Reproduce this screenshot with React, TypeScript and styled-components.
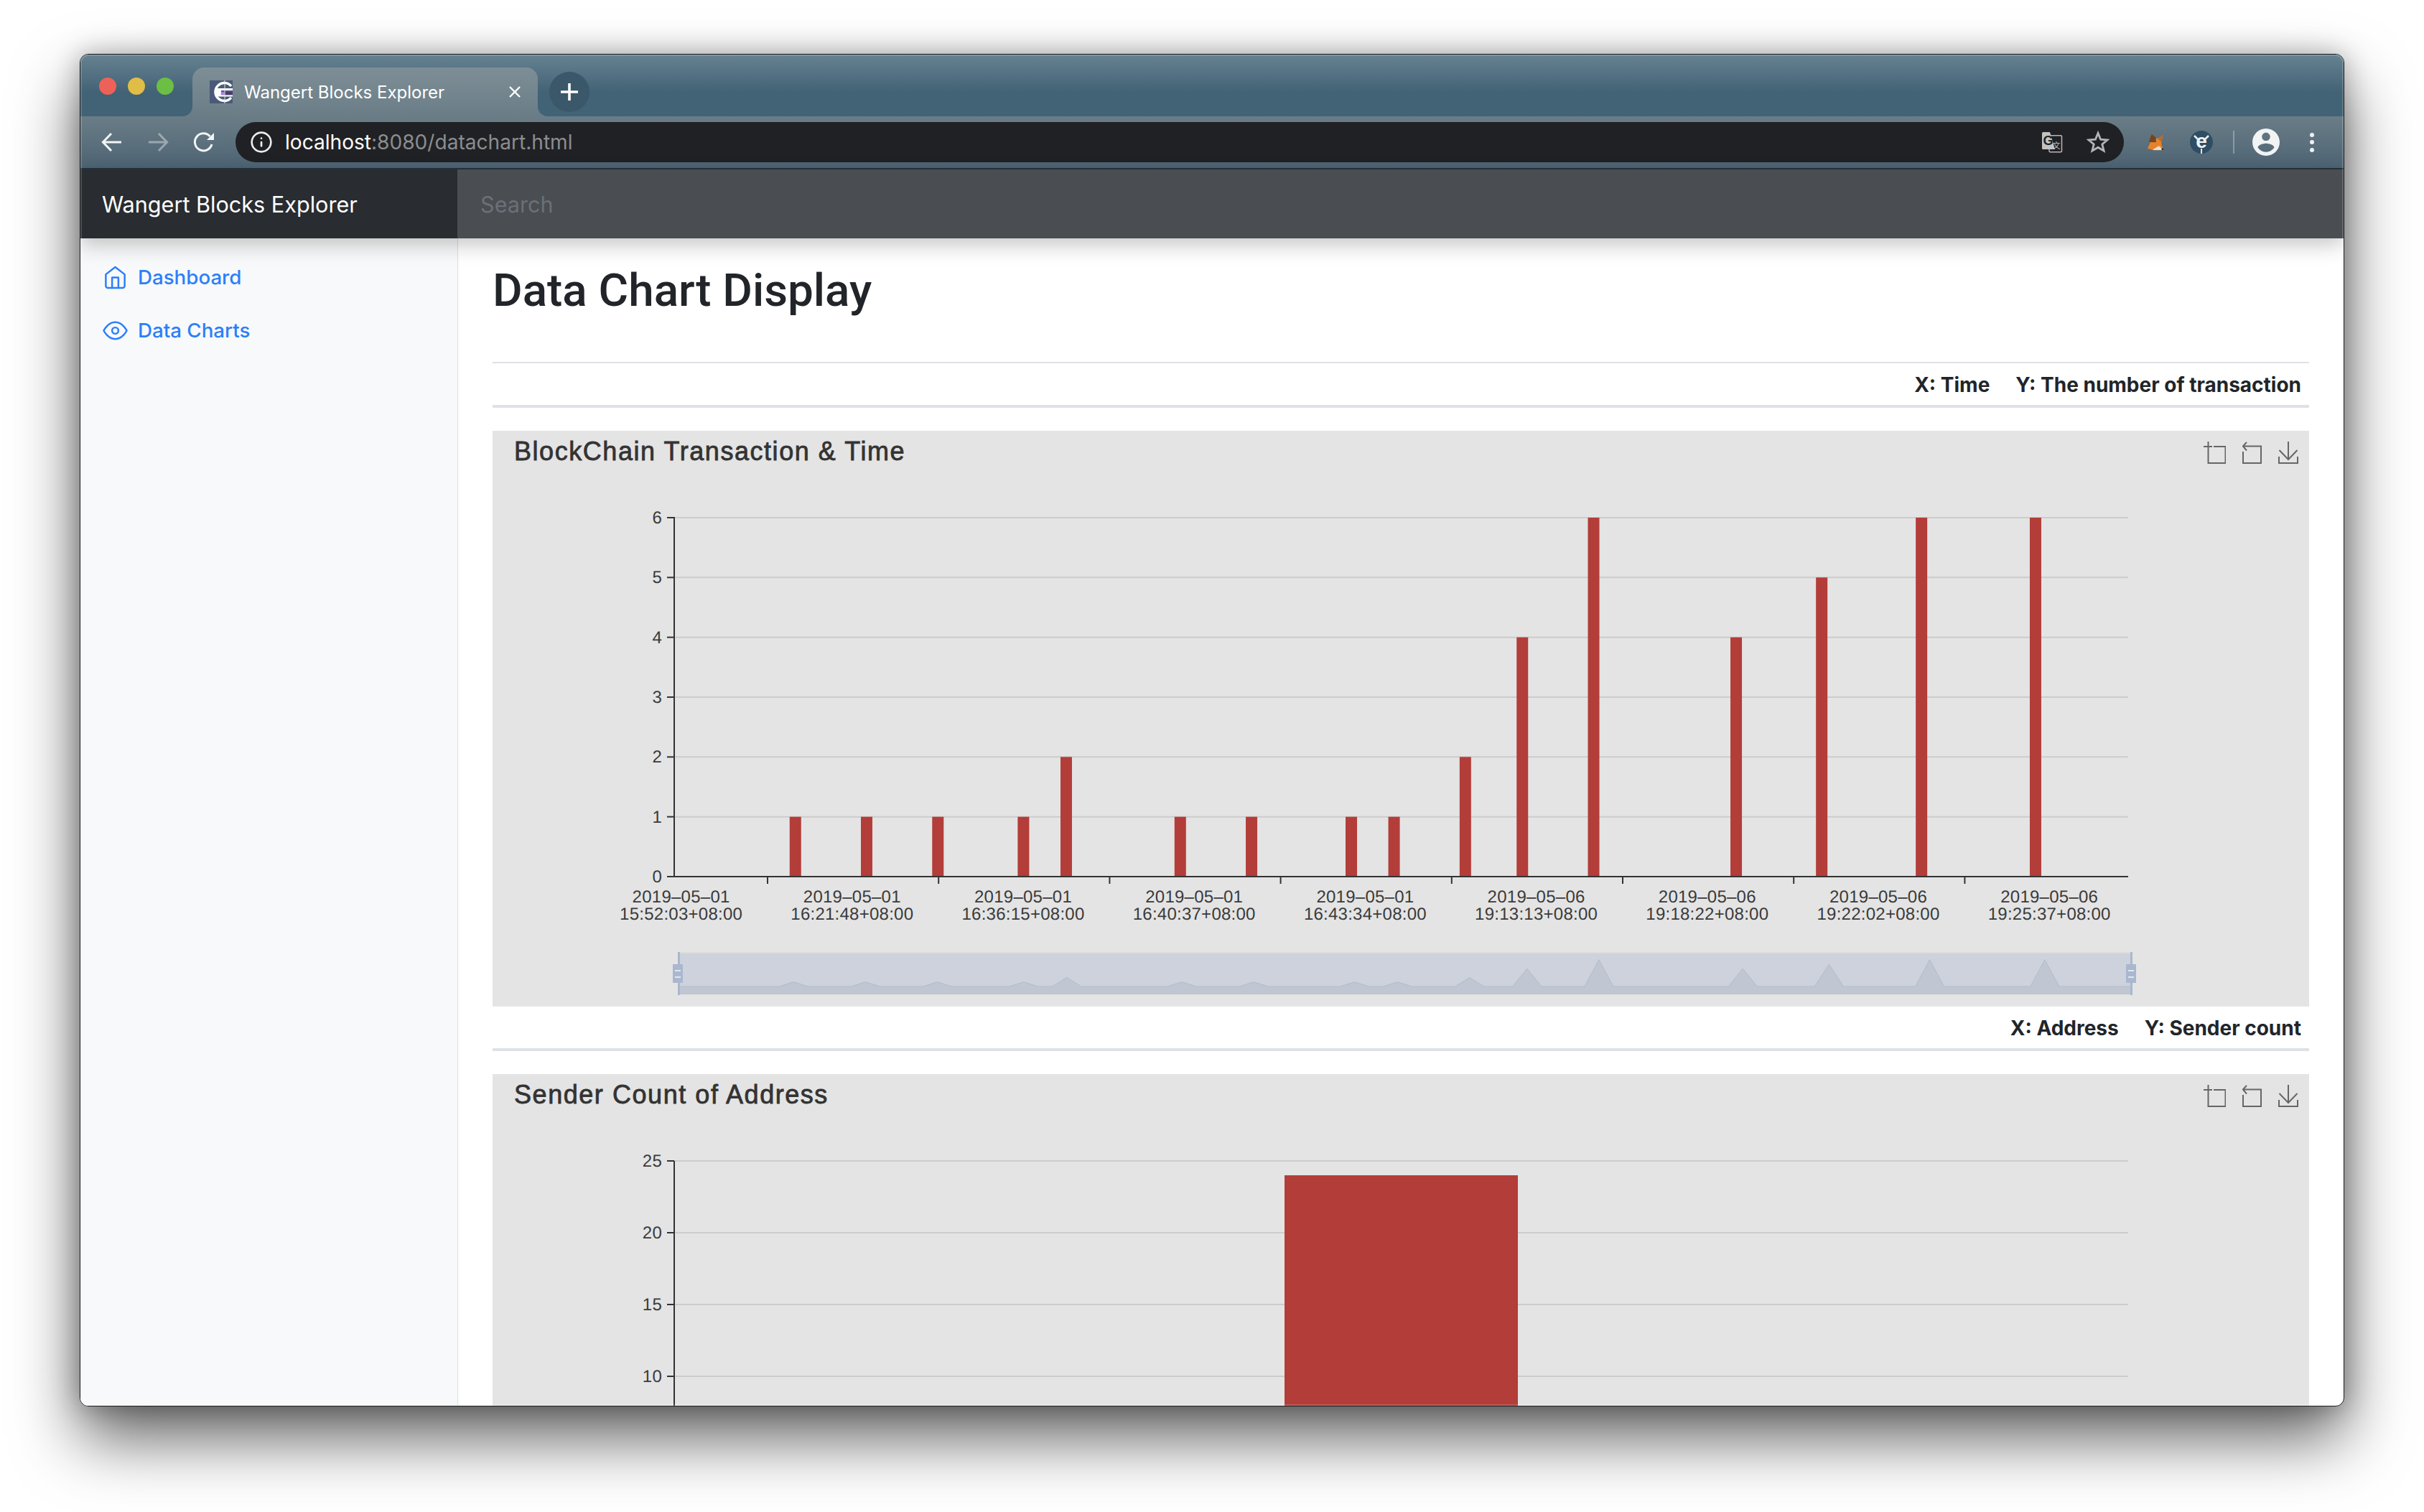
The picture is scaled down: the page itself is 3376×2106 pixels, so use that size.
import React from "react";
import styled, { createGlobalStyle } from "styled-components";
import { Info } from "lucide-react";

const GlobalStyle = createGlobalStyle`
  html, body { margin: 0; padding: 0; background: #fff; }
  body { font-family: Inter, "Liberation Sans", sans-serif; }
  * { box-sizing: border-box; }
`;

const Page = styled.div`
  width: 3376px;
  height: 2106px;
  padding: 75px 0 0 111px;
  overflow: hidden;
  background: #fff;
`;

const Window = styled.div`
  position: relative;
  width: 3154px;
  height: 1884px;
  border: 1px solid #1c1c1c;
  border-radius: 12px;
  overflow: hidden;
  display: flex;
  flex-direction: column;
  background: #fff;
  box-shadow: 0 44px 90px rgba(0, 0, 0, 0.62), 0 0 36px rgba(0, 0, 0, 0.28);
  &::after {
    content: "";
    position: absolute;
    inset: 0;
    border-radius: 11px;
    box-shadow: inset 0 0 0 2px rgba(255, 255, 255, 0.16);
    pointer-events: none;
    z-index: 5;
  }
`;

const TabStrip = styled.div`
  height: 86px;
  flex: none;
  display: flex;
  align-items: flex-end;
  padding-left: 26px;
  background: linear-gradient(180deg, #668291 0%, #426275 62%, #426275 100%);
`;

const Lights = styled.div`
  align-self: flex-start;
  margin-top: 32px;
  display: flex;
  gap: 16px;
`;

const Light = styled.span<{ $color: string }>`
  width: 24px;
  height: 24px;
  border-radius: 50%;
  background: ${(p) => p.$color};
`;

const Tab = styled.div`
  position: relative;
  margin-left: 26px;
  width: 481px;
  height: 68px;
  flex: none;
  display: flex;
  align-items: center;
  padding: 0 24px;
  gap: 16px;
  border-radius: 16px 16px 0 0;
  background: linear-gradient(180deg, #7e8e96 0%, #6a7d87 100%);
  &::before,
  &::after {
    content: "";
    position: absolute;
    bottom: 0;
    width: 14px;
    height: 14px;
  }
  &::before {
    left: -14px;
    background: radial-gradient(circle at 0 0, transparent 13.5px, #6a7d87 14.5px);
  }
  &::after {
    right: -14px;
    background: radial-gradient(circle at 100% 0, transparent 13.5px, #6a7d87 14.5px);
  }
`;

const TabTitle = styled.span`
  flex: 1;
  font-size: 24px;
  color: #fff;
  white-space: nowrap;
`;

const NewTab = styled.div`
  align-self: flex-start;
  margin: 24px 0 0 16px;
  width: 56px;
  height: 56px;
  border-radius: 50%;
  background: #3a5869;
  display: flex;
  align-items: center;
  justify-content: center;
`;

const Toolbar = styled.div`
  height: 74px;
  flex: none;
  display: flex;
  align-items: flex-start;
  padding: 8px 0 0 28px;
  background: linear-gradient(180deg, #6a7d87 0%, #4e6474 97%, #25323c 97%);
`;

const NavButtons = styled.div`
  height: 56px;
  display: flex;
  align-items: center;
  gap: 32px;
`;

const Omnibox = styled.div`
  margin-left: 28px;
  width: 2630px;
  height: 56px;
  flex: none;
  border-radius: 28px;
  background: #202124;
  display: flex;
  align-items: center;
  padding: 0 18px 0 20px;
  color: #ececec;
`;

const Address = styled.span`
  margin-left: 17px;
  font-size: 28.1px;
  color: #fff;
  white-space: nowrap;
  em {
    font-style: normal;
    color: #8b8d90;
  }
`;

const OmniActions = styled.div`
  margin-left: auto;
  display: flex;
  align-items: center;
  gap: 28px;
`;

const IconBox = styled.div<{ $size: number; $gap?: number }>`
  width: ${(p) => p.$size}px;
  height: ${(p) => p.$size}px;
  flex: none;
  margin-left: ${(p) => p.$gap ?? 0}px;
  display: flex;
  align-items: center;
  justify-content: center;
`;

const Extensions = styled.div`
  height: 56px;
  display: flex;
  align-items: center;
`;

const ToolbarRule = styled.span`
  width: 2px;
  height: 32px;
  margin-left: 28px;
  background: rgba(255, 255, 255, 0.3);
`;

const Dots = styled.div`
  margin-left: 42px;
  display: flex;
  flex-direction: column;
  gap: 4.5px;
  span {
    width: 6px;
    height: 6px;
    border-radius: 50%;
    background: #eef1f3;
  }
`;

const Navbar = styled.header`
  position: relative;
  z-index: 2;
  height: 96px;
  flex: none;
  display: flex;
  background: #4a4d52;
  box-shadow: 0 8px 28px rgba(0, 0, 0, 0.24);
`;

const Brand = styled.div`
  width: 525px;
  flex: none;
  padding-left: 30px;
  display: flex;
  align-items: center;
  background: #292c30;
  color: #fff;
  font-size: 30.6px;
  white-space: nowrap;
`;

const Search = styled.div`
  flex: 1;
  padding-left: 32px;
  display: flex;
  align-items: center;
  color: #6c7077;
  font-size: 30.6px;
`;

const Body = styled.div`
  flex: 1;
  min-height: 0;
  display: flex;
`;

const Sidebar = styled.nav`
  width: 526px;
  flex: none;
  padding: 17px 0 0 31px;
  background: #f8f9fa;
  border-right: 1px solid #dcdee0;
`;

const NavLink = styled.a`
  height: 74px;
  display: flex;
  align-items: center;
  gap: 14px;
  color: #2b7ffb;
  font-size: 27.7px;
  font-weight: 500;
`;

const FeatherIcon = styled.svg`
  width: 35px;
  height: 35px;
  flex: none;
  fill: none;
  stroke: currentColor;
  stroke-width: 1.7;
  stroke-linecap: round;
  stroke-linejoin: round;
`;

const Main = styled.main`
  flex: 1;
  min-width: 0;
  padding: 0 48px;
  overflow: hidden;
`;

const PageHeader = styled.div`
  height: 172px;
  padding-top: 34px;
`;

const PageTitle = styled.h1`
  margin: 0;
  font-family: Roboto, Inter, sans-serif;
  font-size: 63.8px;
  line-height: 77px;
  font-weight: 500;
  color: #212529;
`;

const LegendRow = styled.div<{ $top?: boolean }>`
  height: ${(p) => (p.$top ? 64 : 62)}px;
  display: flex;
  justify-content: flex-end;
  align-items: center;
  gap: 36px;
  padding: 2px 11px 0 0;
  border-top: ${(p) => (p.$top ? "2px solid #dee2e6" : "none")};
  border-bottom: 4px solid #dee2e6;
  font-size: 28px;
  font-weight: 700;
  color: #212529;
`;

const Panel = styled.section`
  margin-top: 32px;
  height: 802px;
  flex: none;
  background: #e4e4e4;
`;

const PanelHead = styled.div`
  height: 80px;
  display: flex;
  justify-content: space-between;
  align-items: flex-start;
  padding: 8px 15px 0 30px;
`;

const PanelTitle = styled.h2`
  margin: 1px 0 0;
  font-family: "Liberation Sans", Arial, sans-serif;
  font-size: 36px;
  line-height: 40px;
  font-weight: 400;
  letter-spacing: 1.55px;
  -webkit-text-stroke: 0.8px #333;
  color: #333;
`;

const Tools = styled.div`
  margin-top: 7px;
  display: flex;
  gap: 23px;
`;

const ToolIcon = styled.svg`
  height: 31px;
  fill: none;
  stroke: #666;
  stroke-width: 2;
`;

const ChartSvg = styled.svg<{ $height: number }>`
  display: block;
  width: 2530px;
  height: ${(p) => p.$height}px;
`;

const AxisText = styled.text`
  font-family: "Liberation Sans", Arial, sans-serif;
  font-size: 24px;
  letter-spacing: 0.25px;
  fill: #3a3a3a;
  text-rendering: geometricPrecision;
`;

const BAR = "#b33d39";
const AXIS_L = 939;
const AXIS_R = 2964;

const Toolbox = () => (
  <Tools>
    <ToolIcon width={31} viewBox="0 0 31 31">
      <path d="M6.5 0V30H30.5V7H14M0 7H12" />
    </ToolIcon>
    <ToolIcon width={27} viewBox="0 0 27 31">
      <path d="M1 14V30H26V6.5H1M6 1L0.8 6.5L6 12.5" />
    </ToolIcon>
    <ToolIcon width={28} viewBox="0 0 28 31">
      <path d="M14 0V24M1.5 12L14 25L26.5 12M1 21V30H27V21" />
    </ToolIcon>
  </Tools>
);

const SLOTS = 102;
const series: Record<number, number> = {
  8: 1, 13: 1, 18: 1, 24: 1, 27: 2, 35: 1, 40: 1, 47: 1, 50: 1, 55: 2, 59: 4, 64: 6, 74: 4, 80: 5, 87: 6, 95: 6,
};
const xLabels: [string, string][] = [
  ["2019–05–01", "15:52:03+08:00"],
  ["2019–05–01", "16:21:48+08:00"],
  ["2019–05–01", "16:36:15+08:00"],
  ["2019–05–01", "16:40:37+08:00"],
  ["2019–05–01", "16:43:34+08:00"],
  ["2019–05–06", "19:13:13+08:00"],
  ["2019–05–06", "19:18:22+08:00"],
  ["2019–05–06", "19:22:02+08:00"],
  ["2019–05–06", "19:25:37+08:00"],
];

const shadowPoints = () => {
  const pts: string[] = ["945,1384"];
  for (let i = 0; i < SLOTS; i++) {
    const x = 945 + (i * 2023) / (SLOTS - 1);
    pts.push(`${x.toFixed(1)},${(1374 - 6.2 * (series[i] ?? 0)).toFixed(1)}`);
  }
  pts.push("2968,1384");
  return pts.join(" ");
};

const ZoomHandle = ({ x, rectX, rectW }: { x: number; rectX: number; rectW: number }) => (
  <g>
    <rect x={x - 1} y={1326} width={3} height={60} fill="#a9b8cf" />
    <rect x={rectX} y={1343} width={rectW} height={26} fill="#a9b8cf" />
    <rect x={rectX + 3} y={1351} width={rectW - 6} height={2} fill="#e4e8ee" />
    <rect x={rectX + 3} y={1360} width={rectW - 6} height={2} fill="#e4e8ee" />
  </g>
);

const TimeChart = () => {
  const band = (AXIS_R - AXIS_L) / SLOTS;
  const yOf = (v: number) => 1221 - v * (500 / 6);
  return (
    <ChartSvg $height={722} viewBox="686 680 2530 722">
      {[6, 5, 4, 3, 2, 1].map((v) => (
        <line key={v} x1={AXIS_L} x2={AXIS_R} y1={yOf(v)} y2={yOf(v)} stroke="#ccc" strokeWidth={2} />
      ))}
      {Object.entries(series).map(([i, v]) => (
        <rect
          key={i}
          x={AXIS_L + band * (Number(i) + 0.5) - 8}
          y={yOf(v)}
          width={16}
          height={v * (500 / 6)}
          fill={BAR}
        />
      ))}
      <line x1={AXIS_L} x2={AXIS_L} y1={720} y2={1221} stroke="#333" strokeWidth={2} />
      <line x1={929} x2={AXIS_R} y1={1221} y2={1221} stroke="#333" strokeWidth={2} />
      {[0, 1, 2, 3, 4, 5, 6].map((v) => (
        <g key={v}>
          <line x1={929} x2={AXIS_L} y1={yOf(v)} y2={yOf(v)} stroke="#333" strokeWidth={2} />
          <AxisText x={922} y={yOf(v) + 8} textAnchor="end">
            {v}
          </AxisText>
        </g>
      ))}
      {[0, 1, 2, 3, 4, 5, 6, 7].map((k) => (
        <line key={k} x1={1069 + k * 238.2} x2={1069 + k * 238.2} y1={1221} y2={1231} stroke="#333" strokeWidth={2} />
      ))}
      {xLabels.map(([a, b], k) => (
        <g key={k}>
          <AxisText x={948.6 + k * 238.2} y={1257} textAnchor="middle">
            {a}
          </AxisText>
          <AxisText x={948.6 + k * 238.2} y={1281} textAnchor="middle">
            {b}
          </AxisText>
        </g>
      ))}
      <rect x={945} y={1326} width={2023} height={60} fill="#dcdcdc" />
      <rect x={945} y={1328} width={2023} height={56} fill="#cdd2dc" />
      <polygon points={shadowPoints()} fill="#c0c7d3" stroke="#b4bbc9" strokeWidth={1} />
      <ZoomHandle x={945} rectX={937} rectW={14} />
      <ZoomHandle x={2968} rectX={2961} rectW={14} />
    </ChartSvg>
  );
};

const AddressChart = () => {
  const yOf = (v: number) => 2117 - v * 20;
  return (
    <ChartSvg $height={382} viewBox="686 1576 2530 382">
      {[25, 20, 15, 10].map((v) => (
        <line key={v} x1={AXIS_L} x2={AXIS_R} y1={yOf(v)} y2={yOf(v)} stroke="#ccc" strokeWidth={2} />
      ))}
      <rect x={1789} y={yOf(24)} width={325} height={330} fill={BAR} />
      <line x1={AXIS_L} x2={AXIS_L} y1={1617} y2={1958} stroke="#333" strokeWidth={2} />
      {[25, 20, 15, 10].map((v) => (
        <g key={v}>
          <line x1={929} x2={AXIS_L} y1={yOf(v)} y2={yOf(v)} stroke="#333" strokeWidth={2} />
          <AxisText x={922} y={yOf(v) + 8} textAnchor="end">
            {v}
          </AxisText>
        </g>
      ))}
    </ChartSvg>
  );
};

const Favicon = () => (
  <svg width={32} height={32} viewBox="0 0 32 32">
    <rect width={32} height={32} fill="#4b5a78" />
    <path d="M30 8A12.5 12.5 0 1 0 30 24" fill="none" stroke="#fff" strokeWidth={3.4} />
    <rect x={9} y={11} width={23} height={3} fill="#fff" />
    <rect x={9} y={20} width={23} height={2.5} fill="#fff" />
    <rect x={9} y={11} width={7} height={11} fill="#fff" />
    <rect x={15.7} y={16} width={5} height={4.4} fill="#a883dc" />
    <rect x={20.7} y={16} width={11.3} height={4.4} fill="#4d3b6e" />
    <rect x={20.5} y={0} width={1} height={32} fill="#dfe3ea" />
  </svg>
);

const CloseIcon = () => (
  <svg width={16} height={16} viewBox="0 0 16 16" stroke="#fff" strokeWidth={2.4}>
    <path d="M1 1L15 15M15 1L1 15" />
  </svg>
);

const PlusIcon = () => (
  <svg width={24} height={24} viewBox="0 0 24 24" stroke="#fff" strokeWidth={3.6}>
    <path d="M12 0V24M0 12H24" />
  </svg>
);

const Arrow = ({ flip, dim }: { flip?: boolean; dim?: boolean }) => (
  <svg
    width={32}
    height={32}
    viewBox="0 0 32 32"
    fill="none"
    stroke="#f2f4f5"
    strokeWidth={3}
    opacity={dim ? 0.42 : 1}
    transform={flip ? "scale(-1 1)" : undefined}
  >
    <path d="M29 16H4M15 4L3.4 16L15 28" />
  </svg>
);

const ReloadIcon = () => (
  <svg width={32} height={32} viewBox="0 0 32 32" fill="none" stroke="#f2f4f5" strokeWidth={3}>
    <path d="M24.5 8A12 12 0 1 0 27 19" />
    <path d="M30 3V13H20Z" fill="#f2f4f5" stroke="none" />
  </svg>
);

const TranslateIcon = () => (
  <svg width={36} height={36} viewBox="0 0 36 36">
    <rect x={14} y={8.7} width={17.5} height={23} rx={1.5} fill="none" stroke="#b8b8b8" strokeWidth={1.5} />
    <path d="M5.5 4H15L22 28H5.5A1.5 1.5 0 0 1 4 26.5V5.5A1.5 1.5 0 0 1 5.5 4Z" fill="#c2c2c2" />
    <text x={5.5} y={21.5} fontFamily="Liberation Sans, sans-serif" fontWeight={700} fontSize={18} fill="#202124">
      G
    </text>
    <text x={18.5} y={27} fontFamily="Noto Sans CJK SC, sans-serif" fontSize={11} fill="#c4c4c4">
      文
    </text>
  </svg>
);

const StarIcon = () => (
  <svg width={32} height={32} viewBox="0 0 32 32" fill="none" stroke="#b4b4b6" strokeWidth={2.8}>
    <polygon points="16,3.4 19.6,12.2 29,12.9 21.8,18.9 24.1,28.1 16,23.2 7.9,28.1 10.2,18.9 3,12.9 12.4,12.2" />
  </svg>
);

const FoxIcon = () => (
  <svg width={32} height={32} viewBox="0 0 32 32">
    <path d="M9 16L5 24.7L14 27.3H27L24 18L26.7 6.3L19 10.7L15 11Z" fill="#e6832a" />
    <path d="M19 10.7L26.7 6.3L24.5 16Z" fill="#b86a2a" />
    <path d="M6.7 14.7L10.7 4.7L16.7 9.7V16.3L9 16Z" fill="#764520" />
    <path d="M12 26.5L20.7 21.3L27 27H14Z" fill="#eadfd0" />
    <circle cx={25.7} cy={25.7} r={1.3} fill="#1d1d1d" />
  </svg>
);

const ExtIcon = () => (
  <svg width={32} height={32} viewBox="0 0 32 32">
    <circle cx={16} cy={16} r={16} fill="#2f4e64" />
    <path d="M6 7L11 12M26 7L21 12" stroke="#e8edf0" strokeWidth={2.6} />
    <text x={16} y={24} textAnchor="middle" fontFamily="Liberation Sans, sans-serif" fontWeight={700} fontSize={28} fill="#f2f4f5">
      e
    </text>
    <rect x={15} y={25} width={2} height={7} fill="#dfe5e9" />
  </svg>
);

const AvatarIcon = () => (
  <svg width={38} height={38} viewBox="2 2 20 20">
    <path
      fillRule="evenodd"
      fill="#f1f3f4"
      d="M12 2C6.48 2 2 6.48 2 12s4.48 10 10 10 10-4.48 10-10S17.52 2 12 2zm0 3c1.66 0 3 1.34 3 3s-1.34 3-3 3-3-1.34-3-3 1.34-3 3-3zm0 14.2c-2.5 0-4.71-1.28-6-3.22.03-1.99 4-3.08 6-3.08 1.99 0 5.97 1.09 6 3.08-1.29 1.94-3.5 3.22-6 3.22z"
    />
  </svg>
);

export default function App() {
  return (
    <Page>
      <GlobalStyle />
      <Window>
        <TabStrip>
          <Lights>
            <Light $color="#ed6158" />
            <Light $color="#e0bd46" />
            <Light $color="#6cbf45" />
          </Lights>
          <Tab>
            <Favicon />
            <TabTitle>Wangert Blocks Explorer</TabTitle>
            <CloseIcon />
          </Tab>
          <NewTab>
            <PlusIcon />
          </NewTab>
        </TabStrip>
        <Toolbar>
          <NavButtons>
            <Arrow />
            <Arrow flip dim />
            <ReloadIcon />
          </NavButtons>
          <Omnibox>
            <Info size={32} strokeWidth={2} />
            <Address>
              localhost<em>:8080/datachart.html</em>
            </Address>
            <OmniActions>
              <TranslateIcon />
              <IconBox $size={36}>
                <StarIcon />
              </IconBox>
            </OmniActions>
          </Omnibox>
          <Extensions>
            <IconBox $size={32} $gap={28}>
              <FoxIcon />
            </IconBox>
            <IconBox $size={32} $gap={32}>
              <ExtIcon />
            </IconBox>
            <ToolbarRule />
            <IconBox $size={38} $gap={25}>
              <AvatarIcon />
            </IconBox>
            <Dots>
              <span />
              <span />
              <span />
            </Dots>
          </Extensions>
        </Toolbar>
        <Navbar>
          <Brand>Wangert Blocks Explorer</Brand>
          <Search>Search</Search>
        </Navbar>
        <Body>
          <Sidebar>
            <NavLink>
              <FeatherIcon viewBox="0 0 24 24">
                <path d="M3 9l9-7 9 7v11a2 2 0 0 1-2 2H5a2 2 0 0 1-2-2z" />
                <polyline points="9 22 9 12 15 12 15 22" />
              </FeatherIcon>
              Dashboard
            </NavLink>
            <NavLink>
              <FeatherIcon viewBox="0 0 24 24">
                <path d="M1 12s4-8 11-8 11 8 11 8-4 8-11 8-11-8-11-8z" />
                <circle cx={12} cy={12} r={3} />
              </FeatherIcon>
              Data Charts
            </NavLink>
          </Sidebar>
          <Main>
            <PageHeader>
              <PageTitle>Data Chart Display</PageTitle>
            </PageHeader>
            <LegendRow $top>
              <span>X: Time</span>
              <span>Y: The number of transaction</span>
            </LegendRow>
            <Panel>
              <PanelHead>
                <PanelTitle>BlockChain Transaction &amp; Time</PanelTitle>
                <Toolbox />
              </PanelHead>
              <TimeChart />
            </Panel>
            <LegendRow>
              <span>X: Address</span>
              <span>Y: Sender count</span>
            </LegendRow>
            <Panel>
              <PanelHead>
                <PanelTitle>Sender Count of Address</PanelTitle>
                <Toolbox />
              </PanelHead>
              <AddressChart />
            </Panel>
          </Main>
        </Body>
      </Window>
    </Page>
  );
}
